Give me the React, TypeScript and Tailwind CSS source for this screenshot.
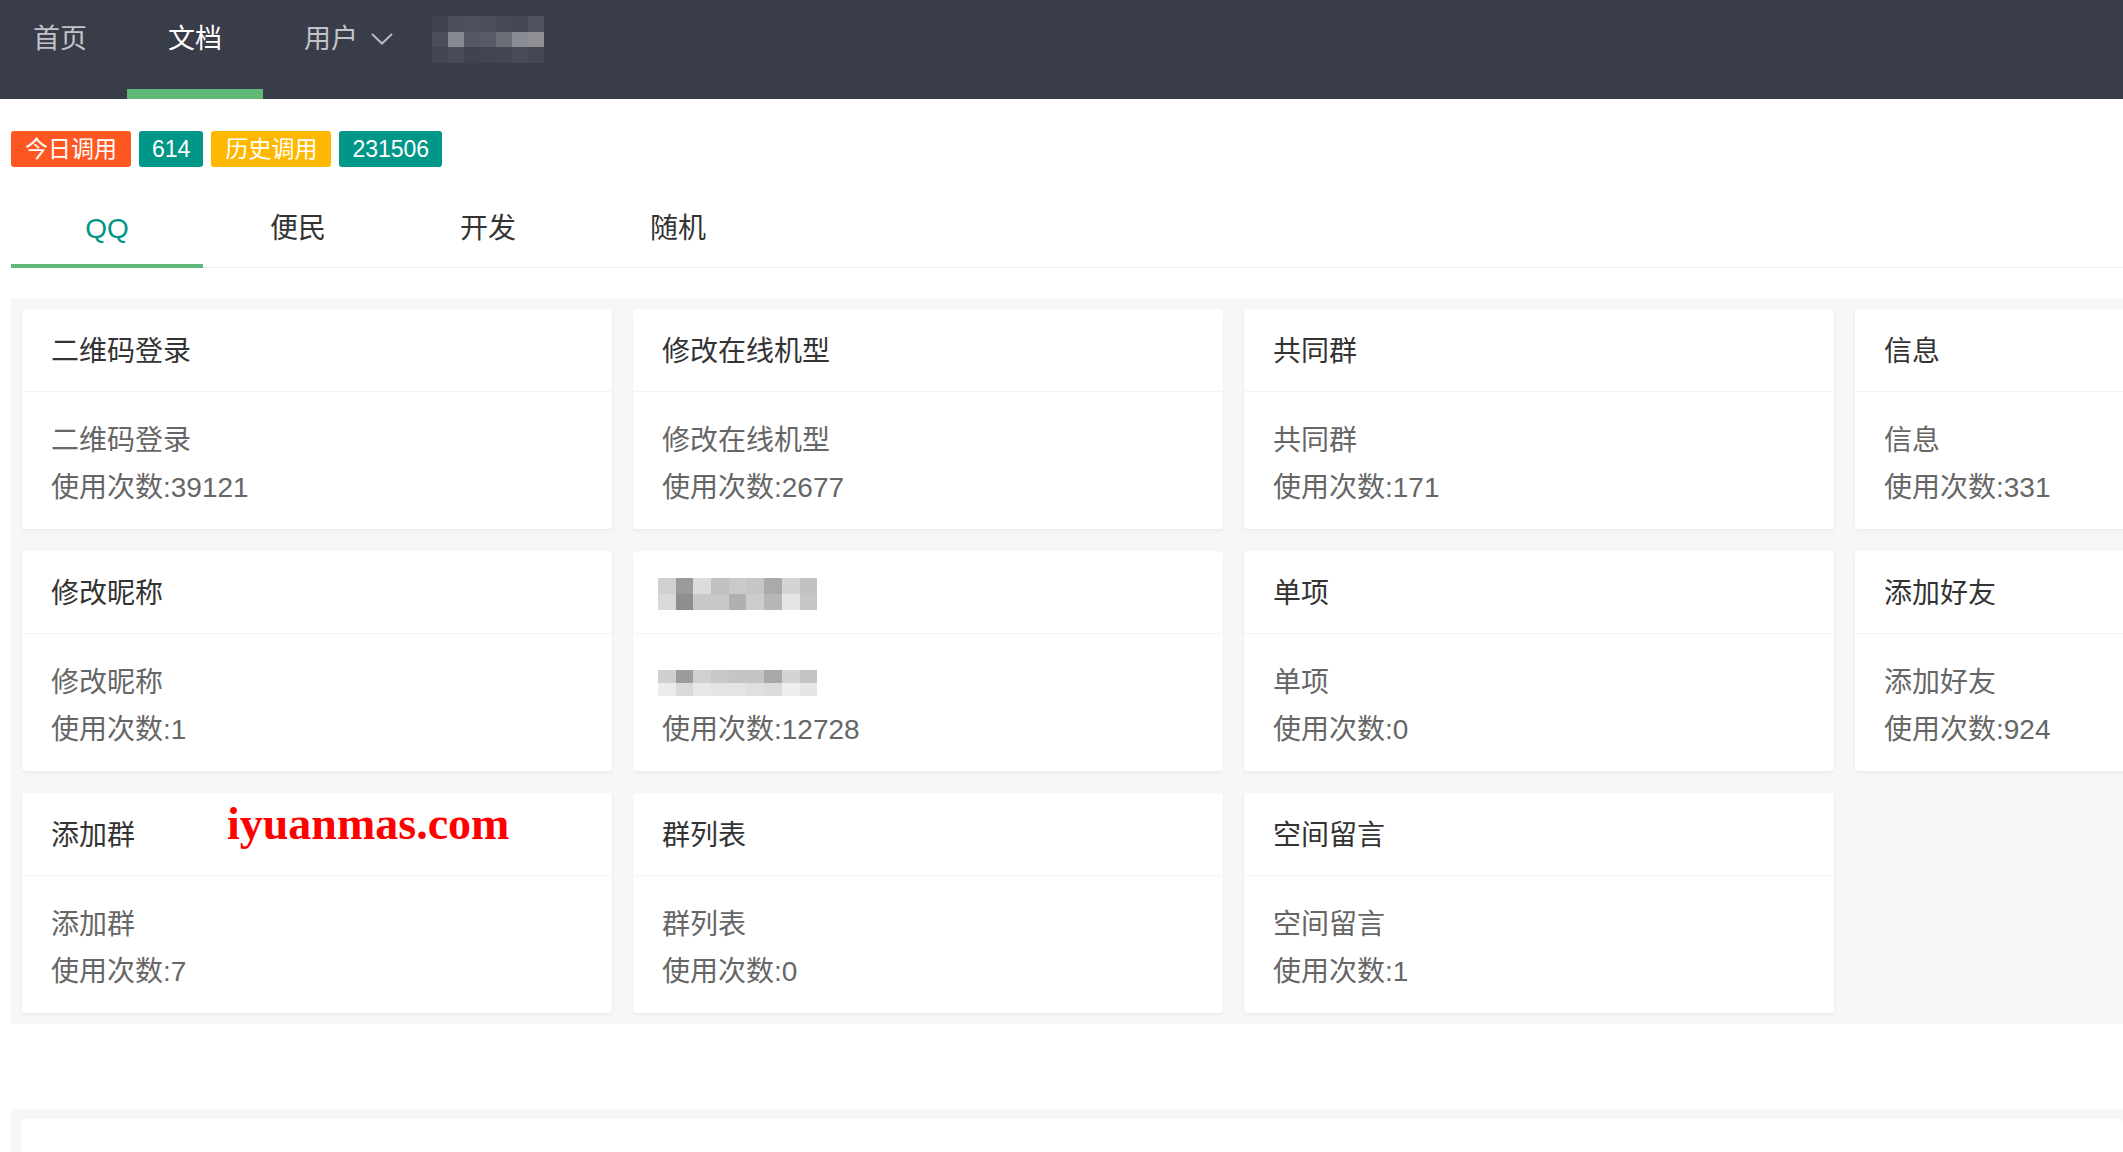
import React from "react";

const font = { fontFamily: '"Liberation Sans", "Noto Sans CJK SC", sans-serif' };

type Card = { title: string; body?: string; count: string; blur?: boolean; mark?: boolean };

const cards: (Card | null)[] = [
  { title: "二维码登录", count: "39121" },
  { title: "修改在线机型", count: "2677" },
  { title: "共同群", count: "171" },
  { title: "信息", count: "331" },
  { title: "修改昵称", count: "1" },
  { title: "", count: "12728", blur: true },
  { title: "单项", count: "0" },
  { title: "添加好友", count: "924" },
  { title: "添加群", count: "7", mark: true },
  { title: "群列表", count: "0" },
  { title: "空间留言", count: "1" },
  null,
];

const headerMosaic = [
  ["#3f4250", "#4a4d5a", "#4d505c", "#4b4e5a", "#464955", "#444753", "#4f525d"],
  ["#4b4e5a", "#868892", "#545764", "#585b66", "#6c6f78", "#8a8c94", "#8e8f94"],
  ["#434652", "#4a4d59", "#40434f", "#424551", "#434652", "#4a4d59", "#444753"],
];

const titleMosaic = [
  ["#d0d0d0", "#9a9a9a", "#dcdcdc", "#c0c0c0", "#cacaca", "#c6c6c6", "#aaaaaa", "#d4d4d4", "#c2c2c2"],
  ["#dadada", "#8e8e8e", "#c8c8c8", "#c8c8c8", "#b0b0b0", "#cccccc", "#b6b6b6", "#e4e4e4", "#c6c6c6"],
];
const bodyMosaic = [
  ["#cfcfcf", "#9c9c9c", "#d0d0d0", "#c8c8c8", "#c4c4c4", "#c4c4c4", "#a8a8a8", "#d4d4d4", "#c4c4c4"],
  ["#ececec", "#dadada", "#e8e8e8", "#e4e4e4", "#e4e4e4", "#e0e0e0", "#dcdcdc", "#eeeeee", "#e6e6e6"],
];

function Mosaic({ rows, cell, h }: { rows: string[][]; cell: string; h: string }) {
  return (
    <div className="flex flex-col">
      {rows.map((r, i) => (
        <div key={i} className="flex">
          {r.map((c, j) => (
            <div key={j} className={`${cell} ${h}`} style={{ backgroundColor: c }} />
          ))}
        </div>
      ))}
    </div>
  );
}

function CardView({ c }: { c: Card }) {
  return (
    <div className="relative w-[590px] h-[220px] bg-white rounded-[4px] shadow-[0_2px_4px_0_rgba(0,0,0,0.05)]">
      <div className="h-[83px] pt-[4px] border-b border-[#f4f4f4] pl-[29px] flex items-center text-[28px] text-[#333]">
        {c.blur ? (
          <div className="-ml-[4px]">
            <Mosaic rows={titleMosaic} cell="w-[17.7px]" h="h-[16px]" />
          </div>
        ) : (
          c.title
        )}
      </div>
      <div className="pl-[29px] pt-[25px] pb-[16px] text-[28px] leading-[47px] text-[#666]">
        {c.blur ? (
          <div className="h-[47px] flex items-center -ml-[4px]">
            <Mosaic rows={bodyMosaic} cell="w-[17.7px]" h="h-[13px]" />
          </div>
        ) : (
          <div>{c.title}</div>
        )}
        <div>使用次数:{c.count}</div>
      </div>
      {c.mark && (
        <div
          className="absolute left-[205px] top-[8px] text-[46px] leading-none font-bold text-[#ff0000]"
          style={{ fontFamily: '"Liberation Serif", serif' }}
        >
          iyuanmas.com
        </div>
      )}
    </div>
  );
}

export default function App() {
  return (
    <div className="w-full min-h-screen overflow-hidden bg-white" style={font}>
      {/* header */}
      <div className="h-[99px] bg-[#393D49] flex">
        <div className="h-full flex flex-col pl-[33px] pr-[40px]">
          <div className="h-[78px] flex items-center text-[27px] text-[#c2c3c8]">首页</div>
        </div>
        <div className="h-full flex flex-col w-[136px]">
          <div className="h-[78px] flex items-center justify-center text-[27px] text-white">文档</div>
          <div className="mt-auto h-[10px] bg-[#5FB878]" />
        </div>
        <div className="h-full flex flex-col pl-[41px]">
          <div className="h-[78px] flex items-center text-[27px] text-[#c2c3c8]">
            用户
            <svg className="ml-[13px]" width="22" height="12" viewBox="0 0 22 12" fill="none">
              <path d="M1 1 L11 10.5 L21 1" stroke="#b9bac0" strokeWidth="2" />
            </svg>
          </div>
        </div>
        <div className="ml-[39px] mt-[16px]">
          <Mosaic rows={headerMosaic} cell="w-[16px]" h="h-[15.5px]" />
        </div>
      </div>

      <div className="pl-[11px]">
        {/* badges */}
        <div className="mt-[32px] flex gap-[8px] text-[23px] text-white">
          <span className="h-[36px] px-[14px] flex items-center rounded-[3px] bg-[#FF5722]">今日调用</span>
          <span className="h-[36px] px-[13px] flex items-center rounded-[3px] bg-[#009688]">614</span>
          <span className="h-[36px] px-[14px] flex items-center rounded-[3px] bg-[#FFB800]">历史调用</span>
          <span className="h-[36px] px-[13px] flex items-center rounded-[3px] bg-[#009688]">231506</span>
        </div>

        {/* tabs */}
        <div className="mt-[23px] h-[78px] flex border-b border-[#eeeeee] text-[28px]">
          <div className="relative w-[192px] flex items-center justify-center text-[#009688]">
            QQ
            <div className="absolute left-0 right-0 -bottom-[1px] h-[4px] bg-[#5FB878]" />
          </div>
          <div className="w-[190px] flex items-center justify-center text-[#333]">便民</div>
          <div className="w-[190px] flex items-center justify-center text-[#333]">开发</div>
          <div className="w-[190px] flex items-center justify-center text-[#333]">随机</div>
        </div>

        {/* cards */}
        <div className="mt-[30px] bg-[#f7f7f7] p-[11px] pr-0">
          <div className="grid grid-cols-[repeat(4,590px)] gap-x-[21px] gap-y-[22px]">
            {cards.map((c, i) => (c ? <CardView key={i} c={c} /> : <div key={i} />))}
          </div>
        </div>

        {/* bottom panel */}
        <div className="mt-[85px] bg-[#f7f7f7] pt-[10px] pl-[11px] h-[60px]">
          <div className="h-full bg-white rounded-[4px]" />
        </div>
      </div>
    </div>
  );
}
